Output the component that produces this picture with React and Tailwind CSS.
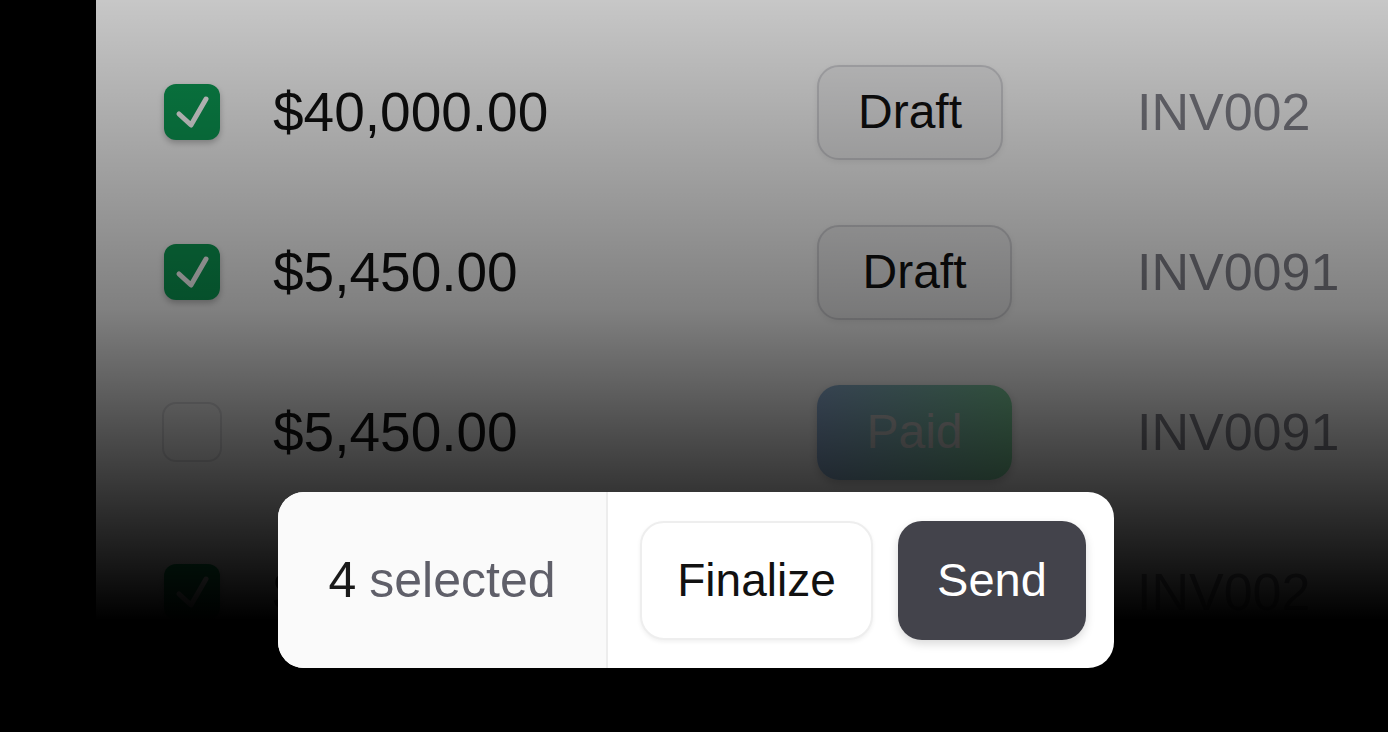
import React from 'react';

const rows = [
  { checked: true, amount: '$40,000.00', status: 'Draft', id: 'INV002', badgeW: 'w-[186px]' },
  { checked: true, amount: '$5,450.00', status: 'Draft', id: 'INV0091', badgeW: 'w-[195px]' },
  { checked: false, amount: '$5,450.00', status: 'Paid', id: 'INV0091', badgeW: 'w-[195px]' },
  { checked: true, amount: '$40,000.00', status: 'Draft', id: 'INV002', badgeW: 'w-[195px]' },
];

const Checkbox = ({ checked }) =>
  checked ? (
    <div className="w-[56px] h-[56px] rounded-[12px] bg-[#0c9d55] shadow-[0_3px_6px_rgba(0,0,0,0.25)] flex items-center justify-center">
      <svg width="56" height="56" viewBox="0 0 56 56" fill="none">
        <path d="M15 30 L27 41 L42 15" stroke="white" strokeWidth="5" strokeLinecap="round" strokeLinejoin="round" />
      </svg>
    </div>
  ) : (
    <div className="w-[60px] h-[60px] -ml-[2px] rounded-[14px] border-2 border-[#e4e4e7] bg-white" />
  );

const Badge = ({ status, width }) => {
  if (status === 'Paid') {
    return (
      <div className={`${width} h-[95px] rounded-[22px] bg-linear-to-r from-[#8fb0d6] to-[#7fd09e] shadow-[0_3px_8px_rgba(0,0,0,0.2)] flex items-center justify-center text-[48px] text-[#d0d0d0]`}>
        {status}
      </div>
    );
  }
  return (
    <div className={`${width} h-[95px] rounded-[22px] border-2 border-[#d6d6da] bg-[#f3f3f4] shadow-[0_2px_6px_rgba(0,0,0,0.08)] flex items-center justify-center text-[48px] text-[#111]`}>
      {status}
    </div>
  );
};

export default function App() {
  return (
    <div className="relative w-[1388px] h-[732px] bg-black overflow-hidden" style={{ fontFamily: '"Liberation Sans", Arial, sans-serif' }}>
      {/* table panel, dimmed by the overlay */}
      <div className="relative ml-[96px] h-[620px] bg-white overflow-hidden">
        <div className="flex flex-col pt-[32px]">
          {rows.map((r, i) => (
            <div key={i} className="h-[160px] flex items-center">
              <div className="w-[177px] pl-[68px] flex items-center">
                <Checkbox checked={r.checked} />
              </div>
              <div className="w-[544px] text-[55px] text-[#111] leading-none">{r.amount}</div>
              <div className="w-[320px] flex items-center">
                <Badge status={r.status} width={r.badgeW} />
              </div>
              <div className="text-[52px] text-[#85858e] leading-none">{r.id}</div>
            </div>
          ))}
        </div>
        <div className="absolute inset-0 bg-linear-to-b from-black/22 via-black/50 via-50% to-black pointer-events-none" />
      </div>

      {/* floating selection bar */}
      <div className="absolute left-[278px] top-[492px] w-[836px] h-[176px] bg-white rounded-[26px] overflow-hidden flex">
        <div className="w-[330px] bg-[#fafafa] border-r-2 border-[#ededed] flex items-center justify-center text-[50px] leading-none">
          <span className="text-[#1a1a1a]">4</span>
          <span className="text-[#5f5f69] ml-[13px]">selected</span>
        </div>
        <div className="flex-1 flex items-center pl-[32px] pr-[28px] gap-[25px]">
          <button className="w-[233px] h-[119px] rounded-[24px] border-2 border-[#eeeeee] bg-white shadow-[0_2px_4px_rgba(0,0,0,0.06)] text-[46px] text-[#111]">
            Finalize
          </button>
          <button className="w-[188px] h-[119px] rounded-[24px] bg-[#43434b] shadow-[0_4px_10px_rgba(0,0,0,0.15)] text-[47px] text-white">
            Send
          </button>
        </div>
      </div>
    </div>
  );
}
